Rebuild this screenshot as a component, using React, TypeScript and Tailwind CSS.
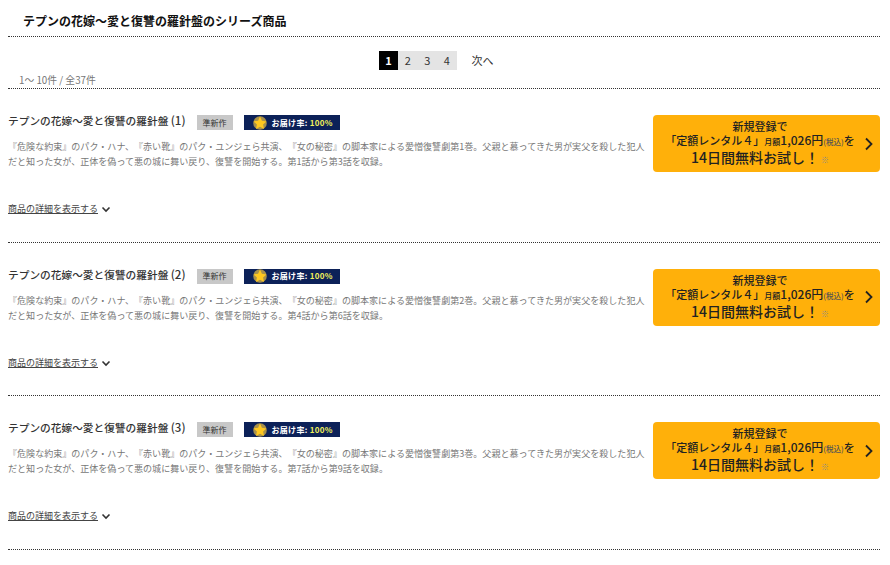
const font = "font-['Noto_Sans_CJK_JP','Liberation_Sans',sans-serif]";

const items = [
  { no: 1, vol: "第1巻", from: "第1話から第3話を収録。" },
  { no: 2, vol: "第2巻", from: "第4話から第6話を収録。" },
  { no: 3, vol: "第3巻", from: "第7話から第9話を収録。" },
];

const Star = () => (
  <svg viewBox="0 0 14 14" className="h-[14px] w-[14px] shrink-0">
    <circle cx="7" cy="7" r="6.8" fill="#a8914a" />
    <path d="M7 .6l1.9 4.2 4.6.6-3.4 3.1.9 4.6L7 10.8l-4 2.3.9-4.6L.5 5.4l4.6-.6z" fill="#ffc81f" />
  </svg>
);

const Row = ({ no, vol, from }: { no: number; vol: string; from: string }) => (
  <section className="flex h-[153.6px] items-start border-b border-dotted border-[#333]">
    <div className="w-[645px] shrink-0">
      <div className="mt-[23px] flex h-[17px] items-center">
        <h3 className="text-[10.7px] leading-[17px] font-medium whitespace-nowrap text-[#333]">
          テプンの花嫁～愛と復讐の羅針盤 <span className="text-[11.5px]">({no})</span>
        </h3>
        <span className="mt-[4px] ml-[11px] flex h-[15px] w-[36px] items-center justify-center bg-[#c8c8c8] text-[8px] text-[#333]">
          準新作
        </span>
        <span className="mt-[4px] ml-[11px] flex h-[15px] w-[96px] items-center gap-[5px] bg-[#0c2158] pl-[9px] text-[8px] font-bold text-white">
          <Star />
          <span className="whitespace-nowrap tracking-[0.3px]">
            お届け率: <span className="text-[#f1f15a]">100%</span>
          </span>
        </span>
      </div>
      <p className="mt-[10px] w-[640px] text-[9.05px] leading-[15px] text-[#777]">
        {`『危険な約束』のパク・ハナ、『赤い靴』のパク・ユンジェら共演、『女の秘密』の脚本家による愛憎復讐劇${vol}。父親と慕ってきた男が実父を殺した犯人だと知った女が、正体を偽って悪の城に舞い戻り、復讐を開始する。${from}`}
      </p>
      <div className="mt-[34px] flex items-center gap-[3px]">
        <a className="text-[9px] leading-[12px] text-[#444] underline">商品の詳細を表示する</a>
        <svg viewBox="0 0 10 10" className="h-[10px] w-[10px]">
          <path d="M1.5 3.5 5 7l3.5-3.5" fill="none" stroke="#333" strokeWidth="1.6" />
        </svg>
      </div>
    </div>
    <button className="mt-[26px] flex h-[57px] w-[227px] items-center rounded-[4px] bg-[#ffb00a] pt-[1px] text-[#222]">
      <div className="w-[214px] text-center font-medium">
        <div className="text-[11px] leading-[13px]">新規登録で</div>
        <div className="text-[11px] leading-[14px] whitespace-nowrap">
          「定額レンタル４」<span className="text-[8px]">月額</span>
          <span className="text-[12px]">1,026円</span>
          <span className="text-[7.5px] text-[#555]">(税込)</span>を
        </div>
        <div className="text-[14px] leading-[17px] whitespace-nowrap">
          14日間無料お試し！<span className="ml-[2px] text-[8px] font-normal text-[#8a8a8a]">※</span>
        </div>
      </div>
      <svg viewBox="0 0 8 14" className="mt-[-1px] ml-[-2px] h-[14px] w-[8px]">
        <path d="M1 1.5 6.5 7 1 12.5" fill="none" stroke="#222" strokeWidth="1.8" />
      </svg>
    </button>
  </section>
);

export default function App() {
  return (
    <div className={`h-[565px] w-[890px] overflow-hidden bg-white pl-[8px] [text-spacing-trim:space-all] ${font}`}>
      <div className="w-[872px]">
        <h2 className="h-[37px] border-b border-dotted border-[#333] pt-[12px] pl-[15px] text-[12px] leading-[17px] font-bold text-[#111]">
          テプンの花嫁～愛と復讐の羅針盤のシリーズ商品
        </h2>
        <nav className="mt-[14px] flex h-[19px] items-center pl-[371px] text-[11px]">
          <span className="flex h-[19px] w-[19px] items-center justify-center bg-black font-bold text-white">1</span>
          {[2, 3, 4].map((n) => (
            <span key={n} className="flex h-[19px] w-[19.5px] items-center justify-center bg-[#e4e4e4] text-[#333]">
              {n}
            </span>
          ))}
          <span className="ml-[15px] text-[#333]">次へ</span>
        </nav>
        <div className="mt-[4px] h-[15px] border-b border-dotted border-[#333] pl-[11px] text-[9.8px] leading-[13px] text-[#777]">
          1～ 10件 / 全37件
        </div>
        {items.map((item) => (
          <Row key={item.no} {...item} />
        ))}
      </div>
    </div>
  );
}
